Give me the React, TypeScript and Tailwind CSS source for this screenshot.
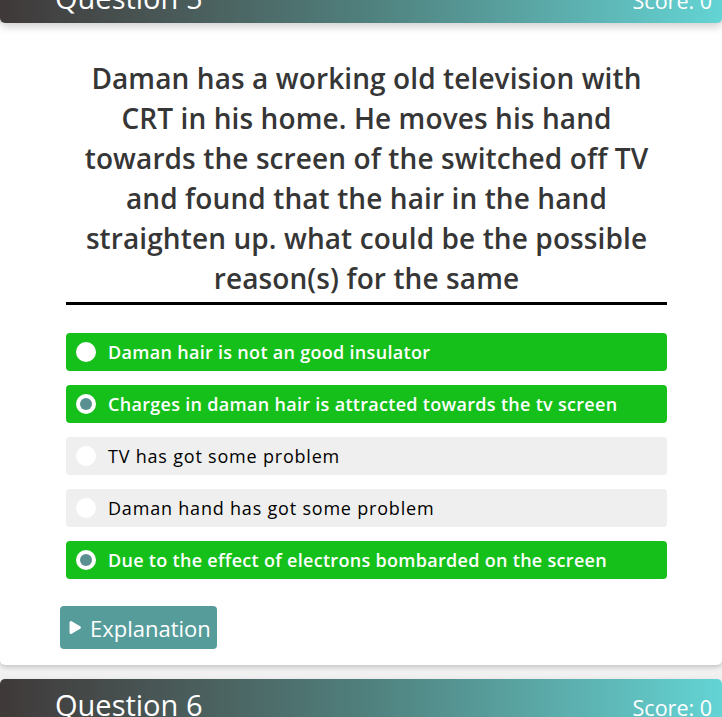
import { Play } from 'lucide-react';

type Option = { text: string; correct: boolean; picked: boolean };

const OPTIONS: Option[] = [
  { text: 'Daman hair is not an good insulator', correct: true, picked: false },
  { text: 'Charges in daman hair is attracted towards the tv screen', correct: true, picked: true },
  { text: 'TV has got some problem', correct: false, picked: false },
  { text: 'Daman hand has got some problem', correct: false, picked: false },
  { text: 'Due to the effect of electrons bombarded on the screen', correct: true, picked: true },
];

const QUESTION_LINES = [
  'Daman has a working old television with',
  'CRT in his home. He moves his hand',
  'towards the screen of the switched off TV',
  'and found that the hair in the hand',
  'straighten up. what could be the possible',
  'reason(s) for the same',
];

function QuestionHeader({ n }: { n: number }) {
  return (
    <div className="relative z-10 flex items-center justify-between h-[51px] pl-[55px] pr-[10px] rounded-[5px] bg-gradient-to-r from-[#3f3939] via-[#4f7f7c] to-[#63d4d4] shadow-[0_4px_8px_rgba(0,0,0,0.18)] text-white">
      <span className="text-[29px] leading-none">Question {n}</span>
      <span className="text-[21.5px] leading-none pt-[6px]">Score: 0</span>
    </div>
  );
}

function Radio({ picked }: { picked: boolean }) {
  return (
    <span className="w-[20px] h-[20px] rounded-full bg-white flex items-center justify-center shrink-0">
      {picked && <span className="w-[12px] h-[12px] rounded-full bg-[#5a9091]" />}
    </span>
  );
}

export default function App() {
  return (
    <div className="min-h-screen bg-[#f1f1f1] font-['Open_Sans',sans-serif] overflow-hidden">
      <div className="-mt-[28px]">
        {/* Question 5 */}
        <div className="mb-[14px]">
          <QuestionHeader n={5} />
          <div className="bg-white rounded-b-[5px] shadow-[0_2px_5px_rgba(0,0,0,0.2)] pl-[66px] pr-[55px] pt-[35px] pb-[16px]">
            <h2 className="text-center text-[28px] leading-[40px] font-semibold text-[#363636] tracking-[0.1px]">
              {QUESTION_LINES.map((l) => (
                <span key={l} className="block whitespace-nowrap">{l}</span>
              ))}
            </h2>
            <div className="h-[3px] bg-black mt-[4px] mb-[28px]" />
            <div className="flex flex-col gap-[14px]">
              {OPTIONS.map((o) => (
                <div
                  key={o.text}
                  className={`h-[38px] rounded-[4px] flex items-center pl-[10px] gap-[12px] ${o.correct ? 'bg-[#15c01a] text-white font-semibold tracking-[0.3px]' : 'bg-[#efefef] text-black font-medium tracking-[0.8px]'}`}
                >
                  <Radio picked={o.picked} />
                  <span className="text-[18px] leading-none">{o.text}</span>
                </div>
              ))}
            </div>
            <button className="mt-[27px] -ml-[6px] h-[43px] pl-[6px] pr-[6px] rounded-[4px] bg-[#569c9a] text-white flex items-center gap-[7px]">
              <Play size={17} fill="white" strokeWidth={0} />
              <span className="text-[22px] leading-none">Explanation</span>
            </button>
          </div>
        </div>

        {/* Question 6 */}
        <div>
          <QuestionHeader n={6} />
          <div className="bg-white h-[200px]" />
        </div>
      </div>
    </div>
  );
}
